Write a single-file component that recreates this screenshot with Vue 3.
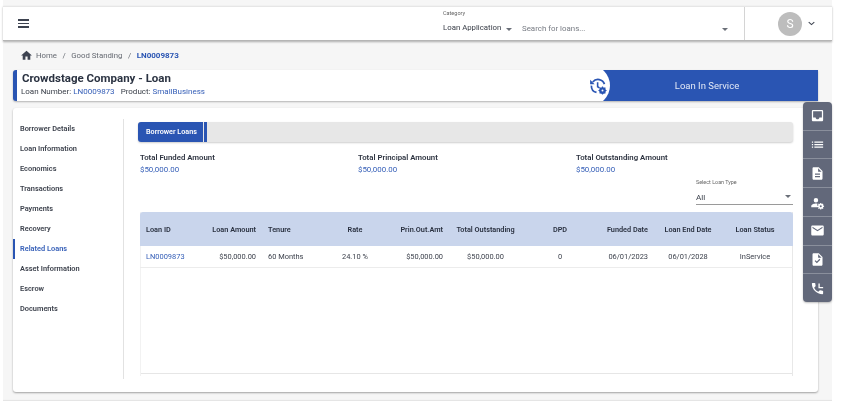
<script setup>
const nav = ['Borrower Details','Loan Information','Economics','Transactions','Payments','Recovery','Related Loans','Asset Information','Escrow','Documents']
const stats = ['Total Funded Amount','Total Principal Amount','Total Outstanding Amount']
const heads = ['Loan ID','Loan Amount','Tenure','Rate','Prin.Out.Amt','Total Outstanding','DPD','Funded Date','Loan End Date','Loan Status']
const cells = ['LN0009873','$50,000.00','60 Months','24.10 %','$50,000.00','$50,000.00','0','06/01/2023','06/01/2028','InService']
const aligns = ['l','r','l','c','r','c','c','r','c','c']
const rail = [
  'M19 3H4.99c-1.11 0-1.98.89-1.98 2L3 19c0 1.1.88 2 1.99 2H19c1.1 0 2-.9 2-2V5c0-1.11-.9-2-2-2zm0 12h-4c0 1.66-1.35 3-3 3s-3-1.34-3-3H4.99V5H19v10z',
  'M3 13h2v-2H3v2zm0 4h2v-2H3v2zm0-8h2V7H3v2zm4 4h14v-2H7v2zm0 4h14v-2H7v2zM7 7v2h14V7H7z',
  'M14 2H6c-1.1 0-1.99.9-1.99 2L4 20c0 1.1.89 2 1.99 2H18c1.1 0 2-.9 2-2V8l-6-6zm2 16H8v-2h8v2zm0-4H8v-2h8v2zm-3-5V3.5L18.5 9H13z',
  'M9.5 12a3.6 3.6 0 1 0 0-7.2 3.6 3.6 0 0 0 0 7.2zM2 19.5v-2c0-2.6 4.6-4 7.5-4 .8 0 1.7.1 2.6.3-.4 1-.6 2.2-.4 3.2.1.9.4 1.8.9 2.5H2zM18 12.6l.3 1.3.9.4 1.2-.7 1.1 1.1-.7 1.2.4.9 1.3.3v1.6l-1.3.3-.4.9.7 1.2-1.1 1.1-1.2-.7-.9.4-.3 1.3h-1.6l-.3-1.3-.9-.4-1.2.7-1.1-1.1.7-1.2-.4-.9-1.3-.3v-1.6l1.3-.3.4-.9-.7-1.2 1.1-1.1 1.2.7.9-.4.3-1.3H18zm-.8 3.6a1.6 1.6 0 1 0 0 3.2 1.6 1.6 0 0 0 0-3.2z',
  'M20 4H4c-1.1 0-1.99.9-1.99 2L2 18c0 1.1.9 2 2 2h16c1.1 0 2-.9 2-2V6c0-1.1-.9-2-2-2zm0 4l-8 5-8-5V6l8 5 8-5v2z',
  'M14 2H6c-1.1 0-1.99.9-1.99 2L4 20c0 1.1.89 2 1.99 2H18c1.1 0 2-.9 2-2V8l-6-6zm-3.06 16L7.4 14.46l1.41-1.41 2.12 2.12 4.24-4.24 1.41 1.41L10.94 18zM13 9V3.5L18.5 9H13z',
  'M20 15.5c-1.25 0-2.45-.2-3.57-.57-.35-.11-.74-.03-1.02.24l-2.2 2.2c-2.83-1.44-5.15-3.75-6.59-6.59l2.2-2.21c.28-.26.36-.65.25-1C8.7 6.45 8.5 5.25 8.5 4c0-.55-.45-1-1-1H4c-.55 0-1 .45-1 1 0 9.39 7.61 17 17 17 .55 0 1-.45 1-1v-3.5c0-.55-.45-1-1-1zM13.5 4v7.5H21V9.4h-5.4V4h-2.1z'
]
</script>

<template>
  <div class="page">
    <div class="shell">
      <header class="top">
        <button class="burger" aria-label="Menu"><i></i><i></i><i></i></button>
        <div class="cat">
          <span class="cat-label">Category</span>
          <span class="cat-value">Loan Application<b class="caret"></b></span>
        </div>
        <div class="search">
          <span>Search for loans...</span>
          <b class="caret"></b>
        </div>
        <div class="user">
          <span class="avatar">S</span>
          <svg class="chev" viewBox="0 0 10 6"><path d="M1 1l4 3.6L9 1" fill="none" stroke="#3d4350" stroke-width="1.5"/></svg>
        </div>
      </header>

      <nav class="crumbs">
        <svg class="home" viewBox="0 0 24 24"><path d="M10 20v-6h4v6h5v-8h3L12 3 2 12h3v8z"/></svg>
        <span>Home</span><em>/</em><span>Good Standing</span><em>/</em><strong>LN0009873</strong>
      </nav>

      <section class="title-card">
        <div class="title-text">
          <h1>Crowdstage Company - Loan</h1>
          <p>Loan Number: <a>LN0009873</a><span class="gap"></span>Product: <a>SmallBusiness</a></p>
        </div>
        <div class="status">
          <svg class="status-icon" viewBox="0 0 24 24">
            <path d="M5 6.6A9 9 0 0 1 20.6 9.5M3.2 11.5A9 9 0 0 0 10 20.6" fill="none" stroke="#2a55b3" stroke-width="2.3"/>
            <path d="M1.5 3.8v6h6z" fill="#2a55b3"/>
            <path d="M11.5 7v6l2.5 1.6" fill="none" stroke="#2a55b3" stroke-width="2.1"/>
            <circle cx="18" cy="18" r="3.3" fill="none" stroke="#2a55b3" stroke-width="2.4"/>
            <path d="M18 12.6v10.8M12.6 18h10.8M14.2 14.2l7.6 7.6M21.8 14.2l-7.6 7.6" stroke="#2a55b3" stroke-width="1.6"/>
            <circle cx="18" cy="18" r="1.3" fill="#fff"/>
          </svg>
          <span>Loan In Service</span>
        </div>
      </section>

      <main class="card">
        <aside class="side">
          <a v-for="n in nav" :key="n" :class="{ on: n === 'Related Loans' }">{{ n }}</a>
        </aside>
        <div class="content">
          <div class="tabs"><span class="tab">Borrower Loans</span><i class="tab-mark"></i></div>
          <div class="stats">
            <div v-for="s in stats" :key="s"><strong>{{ s }}</strong><span>$50,000.00</span></div>
          </div>
          <div class="select-row">
            <div class="select">
              <label>Select Loan Type</label>
              <div class="select-value"><span>All</span><b class="caret"></b></div>
            </div>
          </div>
          <div class="table">
            <div class="thead">
              <span v-for="(h, i) in heads" :key="h" :class="aligns[i]">{{ h }}</span>
            </div>
            <div class="trow">
              <span v-for="(c, i) in cells" :key="i" :class="[aligns[i], { link: i === 0 }]">{{ c }}</span>
            </div>
            <div class="tbody-rest"></div>
          </div>
        </div>
      </main>
    </div>

    <div class="rail">
      <div v-for="(d, i) in rail" :key="i" class="rail-item">
        <svg viewBox="0 0 24 24"><path :d="d" fill="#fff" fill-rule="evenodd"/></svg>
      </div>
    </div>
  </div>
</template>

<style>
html, body { margin: 0; background: #fff; }
</style>

<style scoped>
.page {
  position: relative;
  width: 844px;
  height: 401px;
  overflow: hidden;
  background: #fff;
  font-family: Roboto, "Liberation Sans", sans-serif;
  color: #2f3542;
  filter: blur(.25px);
}
.shell {
  width: 829px;
  height: 395px;
  margin-left: 3px;
  padding-top: 6px;
  background: #f6f6f6;
  box-shadow: inset 0 -2px 1px -1px #e4e4e4;
}
.top {
  display: flex;
  align-items: stretch;
  height: 33px;
  background: #fff;
  border-top: 1px solid #e6e6e6;
  border-bottom: 1px solid #b5b5b5;
  box-shadow: 0 1px 2px rgba(0,0,0,.3);
}
.burger {
  flex: none;
  display: flex;
  flex-direction: column;
  justify-content: center;
  gap: 2px;
  width: 26px;
  margin: 0 0 0 15px;
  padding: 0;
  border: 0;
  background: none;
}
.burger i { display: block; width: 11px; height: 1.5px; background: #3d4350; }
.cat {
  display: flex;
  flex-direction: column;
  margin-left: 399px;
  width: 79px;
  padding-top: 3px;
}
.cat-label { font-size: 5.5px; line-height: 7px; color: #666; }
.cat-value {
  display: flex;
  align-items: center;
  font-size: 7.8px;
  line-height: 10px;
  margin-top: 6px;
  color: #363b45;
  white-space: nowrap;
}
.caret {
  display: inline-block;
  width: 0;
  height: 0;
  border-left: 3px solid transparent;
  border-right: 3px solid transparent;
  border-top: 3px solid #6a6f78;
}
.cat-value .caret { margin: 2px 0 0 5px; }
.search {
  display: flex;
  align-items: center;
  justify-content: space-between;
  width: 223px;
  padding: 10px 16px 0 0;
  box-sizing: border-box;
  font-size: 7.9px;
  color: #777b83;
  border-right: 1px solid #d4d4d4;
}
.search .caret { margin-top: 2px; }
.user {
  display: flex;
  align-items: center;
  padding-left: 33px;
}
.avatar {
  display: flex;
  align-items: center;
  justify-content: center;
  width: 24px;
  height: 24px;
  border-radius: 50%;
  background: #bdbdbd;
  color: #fff;
  font-size: 12px;
}
.chev { width: 7px; height: 5px; margin: -1px 0 0 6px; }

.crumbs {
  display: flex;
  align-items: center;
  height: 14px;
  margin: 7px 0 0 17px;
  font-size: 7.8px;
  color: #666a72;
}
.home { width: 13px; height: 13px; margin: 1px 3px 0 0; fill: #3d4350; }
.crumbs em { font-style: normal; margin: 0 5.5px; }
.crumbs strong { color: #2a55b3; font-weight: 700; font-size: 8px; }

.title-card {
  display: flex;
  height: 31px;
  margin: 8px 14px 0 10px;
  background: #fff;
  border-left: 4px solid #2a55b3;
  border-radius: 3px 0 0 3px;
  box-shadow: 0 1px 2px rgba(0,0,0,.28);
  box-sizing: border-box;
}
.title-text { flex: 1; padding-left: 5px; }
h1 {
  margin: 2px 0 0;
  font-size: 11.5px;
  line-height: 13px;
  font-weight: 700;
  color: #2b3342;
}
.title-text p {
  margin: 2px 0 0 -1px;
  font-size: 8px;
  line-height: 10px;
  color: #3b404a;
}
.title-text a { color: #3760b8; }
.gap { display: inline-block; width: 6px; }
.status {
  position: relative;
  display: flex;
  align-items: center;
  justify-content: center;
  width: 215px;
  padding-right: 7px;
  box-sizing: border-box;
  background: #2a55b3;
  color: #e3e9f6;
  font-size: 9.5px;
  overflow: visible;
}
.status::before {
  content: "";
  position: absolute;
  left: -34px;
  top: -5px;
  width: 41px;
  height: 41px;
  border-radius: 50%;
  background: #fff;
  clip-path: inset(5px 0 5px 0);
}
.status span { position: relative; }
.status-icon {
  position: absolute;
  left: -14px;
  top: 7px;
  width: 18px;
  height: 18px;
}

.card {
  display: flex;
  height: 284px;
  margin: 7px 14px 0 10px;
  background: #fff;
  border-radius: 3px;
  box-shadow: 0 1px 2px rgba(0,0,0,.35);
}
.side {
  flex: none;
  display: flex;
  flex-direction: column;
  width: 111px;
  height: 260px;
  margin-top: 11px;
  box-sizing: border-box;
  border-right: 1px solid #e2e2e2;
}
.side a {
  display: block;
  height: 20px;
  line-height: 20px;
  padding-left: 7px;
  font-size: 7.4px;
  font-weight: 600;
  color: #3d424d;
}
.side a.on {
  padding-left: 5px;
  border-left: 2px solid #2a55b3;
  color: #3760b8;
}
.content {
  flex: none;
  width: 655px;
  margin-left: 14px;
  padding-top: 14px;
}
.tabs {
  display: flex;
  height: 20px;
  background: #e7e7e7;
  border-radius: 3px;
  box-shadow: 0 1px 2px rgba(0,0,0,.2);
}
.tab {
  width: 65px;
  padding-left: 8px;
  box-sizing: border-box;
  line-height: 20px;
  font-size: 7.2px;
  font-weight: 600;
  color: #fff;
  background: #2a55b3;
  border-radius: 3px 0 0 3px;
}
.tab-mark { width: 3px; margin-left: 1px; background: #2a55b3; }
.stats {
  display: grid;
  grid-template-columns: 218px 218px 1fr;
  margin: 10px 0 0 2px;
  line-height: 12px;
}
.stats div { display: flex; flex-direction: column; }
.stats strong { font-weight: 600; color: #2f3542; font-size: 7.8px; }
.stats span { color: #3760b8; font-size: 7.9px; }
.select-row { display: flex; justify-content: flex-end; margin-top: 2px; }
.select { width: 97px; }
.select label { display: block; font-size: 5.4px; line-height: 8px; color: #666; }
.select-value {
  display: flex;
  align-items: center;
  justify-content: space-between;
  height: 19px;
  padding: 3px 2px 0 0;
  box-sizing: border-box;
  font-size: 8.1px;
  color: #3d424d;
  border-bottom: 1px solid #9a9a9a;
}
.table {
  width: 653px;
  height: 164px;
  margin: 7px 0 0 2px;
  display: flex;
  flex-direction: column;
  box-sizing: border-box;
  border-left: 1px solid #f2f2f2;
  border-right: 1px solid #e8e8e8;
}
.thead, .trow {
  display: grid;
  grid-template-columns: 60px 62px 58px 70px 59px 73px 76px 56px 68px 66px;
  align-items: center;
  margin: 0 -1px;
}
.thead {
  height: 34px;
  background: #c9d5ec;
  border-radius: 3px 3px 0 0;
  font-size: 7.3px;
  font-weight: 600;
  color: #2a3140;
}
.trow {
  height: 21px;
  font-size: 7.45px;
  color: #3d424d;
  border-bottom: 1px solid #ececec;
}
.thead span, .trow span { padding: 0 6px; white-space: nowrap; }
.l { text-align: left; }
.r { text-align: right; }
.c { text-align: center; }
.link { color: #3760b8; }
.tbody-rest { height: 105px; border-bottom: 1px solid #e6e6e6; }

.rail {
  position: absolute;
  left: 803px;
  top: 102px;
  width: 29px;
  height: 200px;
  display: flex;
  flex-direction: column;
  background: #62687a;
  border-radius: 4px;
  box-shadow: 0 1px 2px rgba(0,0,0,.25);
}
.rail-item {
  flex: 1;
  display: flex;
  align-items: center;
  justify-content: center;
  border-bottom: 1px solid #8a8f9c;
}
.rail-item:last-child { border-bottom: 0; }
.rail-item svg { width: 15px; height: 15px; }
</style>
